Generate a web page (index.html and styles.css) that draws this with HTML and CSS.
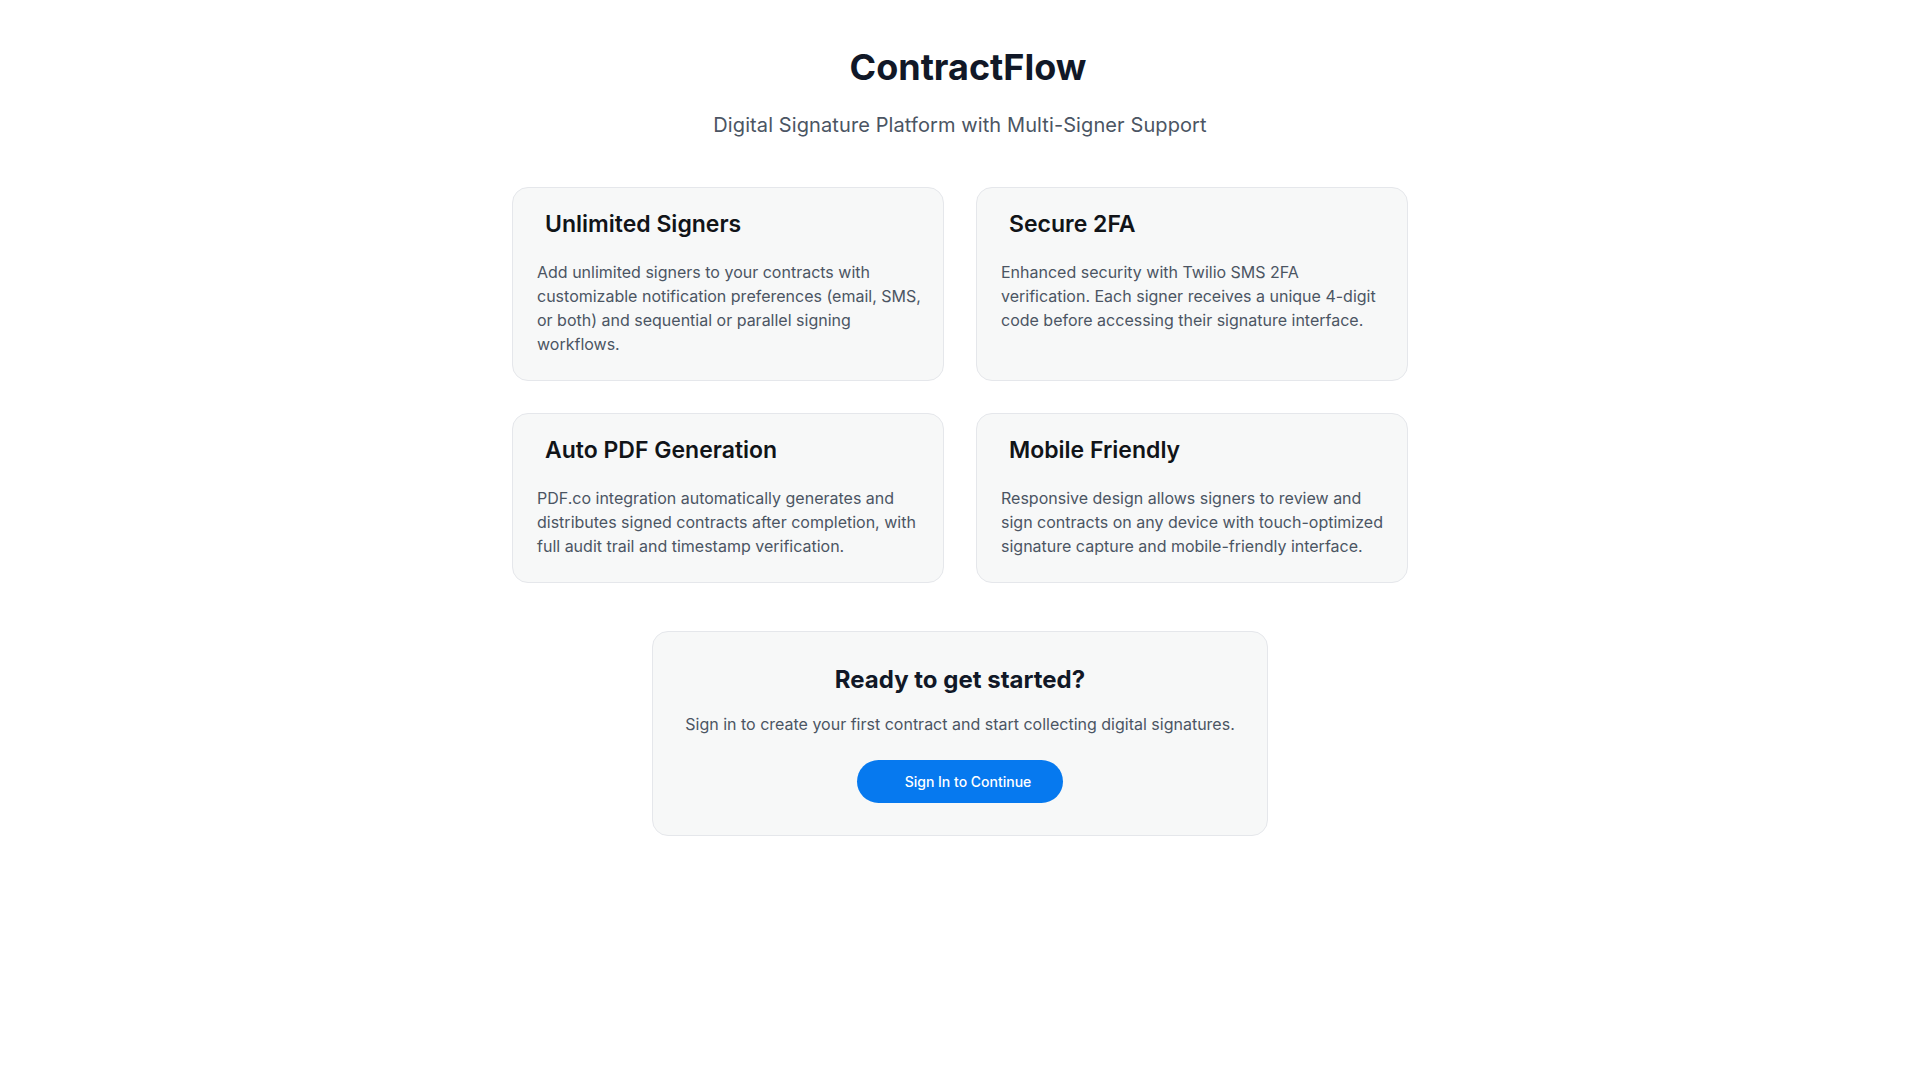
FILE: index.html
```html
<!DOCTYPE html>
<html lang="en">
<head>
  <meta charset="UTF-8">
  <meta name="viewport" content="width=device-width, initial-scale=1.0">
  <title>ContractFlow</title>
  <link rel="stylesheet" href="styles.css">
</head>
<body>
  <main class="page">
    <h1 class="title">ContractFlow</h1>
    <p class="subtitle">Digital Signature Platform with Multi-Signer Support</p>

    <div class="features">
      <div class="feature">
        <h3>Unlimited Signers</h3>
        <p>Add unlimited signers to your contracts with customizable notification preferences (email, SMS, or both) and sequential or parallel signing workflows.</p>
      </div>
      <div class="feature">
        <h3>Secure 2FA</h3>
        <p>Enhanced security with Twilio SMS 2FA verification. Each signer receives a unique 4-digit code before accessing their signature interface.</p>
      </div>
      <div class="feature">
        <h3>Auto PDF Generation</h3>
        <p>PDF.co integration automatically generates and distributes signed contracts after completion, with full audit trail and timestamp verification.</p>
      </div>
      <div class="feature">
        <h3>Mobile Friendly</h3>
        <p>Responsive design allows signers to review and sign contracts on any device with touch-optimized signature capture and mobile-friendly interface.</p>
      </div>
    </div>

    <div class="cta">
      <h2>Ready to get started?</h2>
      <p>Sign in to create your first contract and start collecting digital signatures.</p>
      <button class="cta-button">Sign In to Continue</button>
    </div>
  </main>
</body>
</html>
```

FILE: styles.css
```css
body {
  margin: 0;
  background-color: #ffffff;
  font-family: Inter, "Noto Sans", sans-serif;
  color: #111827;
}
.page {
  max-width: 896px;
  margin: 0 auto;
  padding-top: 47px;
  text-align: center;
}
.title {
  margin: 0 0 24px;
  padding-left: 16px;
  font-size: 36px;
  line-height: 40px;
  font-weight: 700;
  color: #111827;
}
.subtitle {
  margin: 0 0 48px;
  font-size: 20px;
  line-height: 28px;
  letter-spacing: 0.1px;
  color: #4b5563;
}
.features {
  display: grid;
  grid-template-columns: 1fr 1fr;
  gap: 32px;
  text-align: left;
}
.feature {
  background-color: #f7f8f8;
  border: 1px solid #e5e7eb;
  border-radius: 16px;
  padding: 24px 20px 24px 24px;
}
.feature h3 {
  margin: 0 0 24px;
  padding-left: 8px;
  font-size: 23px;
  line-height: 24px;
  font-weight: 600;
  color: #111418;
}
.feature p {
  margin: 0;
  font-size: 16px;
  line-height: 24px;
  color: #4b5563;
}
.cta {
  display: inline-block;
  margin-top: 48px;
  padding: 32px;
  background-color: #f7f8f8;
  border: 1px solid #e5e7eb;
  border-radius: 16px;
}
.cta h2 {
  margin: 0 0 16px;
  font-size: 24px;
  line-height: 32px;
  font-weight: 700;
  color: #111827;
}
.cta p {
  margin: 0 0 24px;
  font-size: 16px;
  line-height: 24px;
  color: #4b5563;
}
.cta-button {
  height: 43px;
  padding: 0 32px 0 48px;
  border: none;
  border-radius: 999px;
  background-color: #0679ef;
  color: #ffffff;
  font-family: Inter, "Noto Sans", sans-serif;
  font-size: 14px;
  font-weight: 500;
  cursor: pointer;
}
```
